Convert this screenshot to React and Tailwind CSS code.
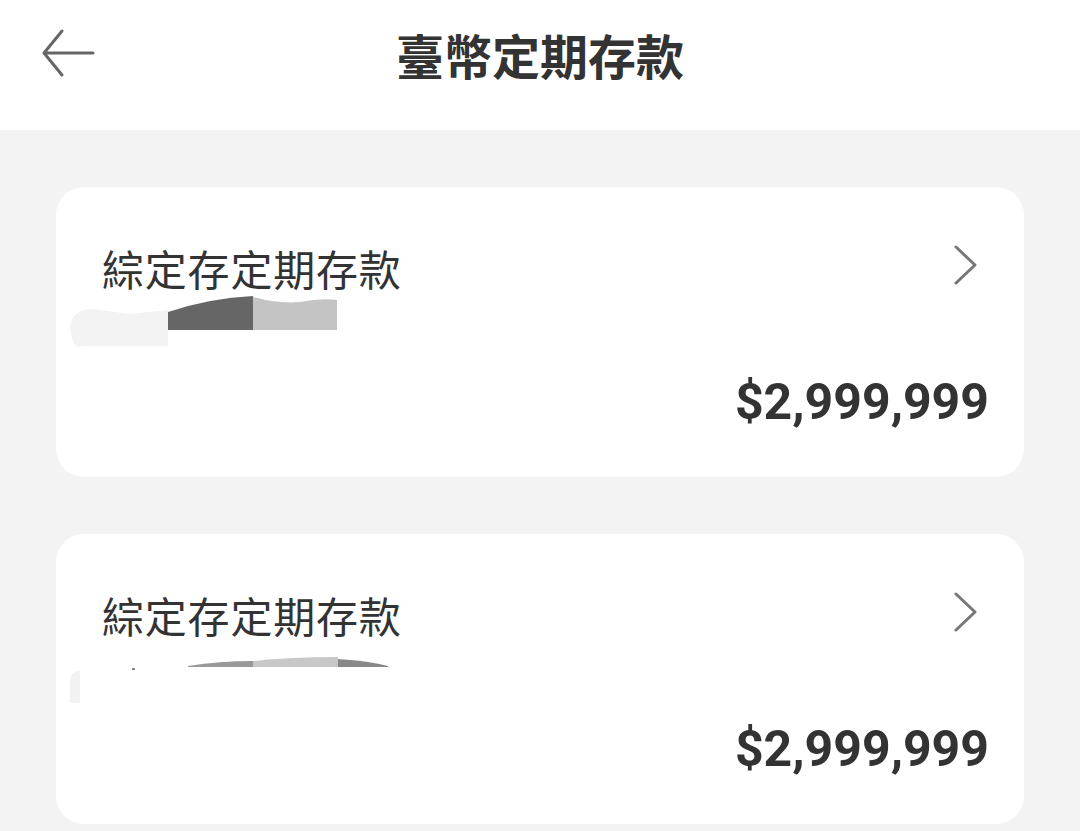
import React from "react";

function Card({ variant }) {
  return (
    <div className="h-[290px] rounded-[28px] bg-white flex flex-col pl-[46px] pr-[36px] pt-[56px] pb-[50px]">
      <div className="flex items-start justify-between">
        <div
          className="text-[42px] leading-[50px] text-[#333] tracking-[0.8px]"
          style={{ fontFamily: '"Noto Sans CJK TC", "Noto Sans", sans-serif' }}
        >
          綜定存定期存款
        </div>
        <svg width="26" height="40" viewBox="0 0 26 40" className="mr-[9px] mt-[2px]">
          <path d="M3 2 L22 20 L3 38" fill="none" stroke="#777" strokeWidth="3" strokeLinecap="round" strokeLinejoin="round" />
        </svg>
      </div>
      <div className="h-[44px] -ml-[32px] mt-[3px]">
        {variant === 1 ? (
          <svg width="280" height="60" viewBox="0 0 280 60">
            <path d="M0 30 Q4 10 30 14 L60 18 L98 14 L98 50 L12 50 Q2 55 0 30 Z" fill="#f3f3f3" />
            <path d="M98 14 Q140 0 183 -2 L183 32 L98 32 Z" fill="#666" transform="translate(0 2)" />
            <path d="M183 1 Q210 8 230 6 Q250 2 267 4 L267 34 L183 34 Z" fill="#c4c4c4" />
          </svg>
        ) : (
          <svg width="360" height="60" viewBox="0 0 360 60">
            <path d="M0 40 Q0 28 10 28 L10 60 L0 60 Z" fill="#f2f2f2" />
            <rect x="62" y="25" width="3" height="2" fill="#888" />
            <path d="M118 23 Q150 18 183 18 L183 24 L118 24 Z" fill="#999" />
            <path d="M183 18 Q220 14 268 14 L268 24 L183 24 Z" fill="#c8c8c8" />
            <path d="M268 16 Q300 18 318 23 L318 24 L268 24 Z" fill="#888" />
          </svg>
        )}
      </div>
      <div className="mt-auto flex justify-end">
        <div
          className="text-[50px] leading-[50px] font-bold text-[#333] -mr-[1px]"
          style={{ fontFamily: 'Roboto, "Liberation Sans", sans-serif' }}
        >
          $2,999,999
        </div>
      </div>
    </div>
  );
}

export default function App() {
  return (
    <div className="w-[1080px] h-[831px] overflow-hidden bg-[#f3f3f3]">
      <header className="h-[130px] bg-white relative">
        <div className="h-[108px] flex items-center justify-center">
          <div
            className="text-[48px] font-bold text-[#333]"
            style={{ fontFamily: '"Noto Sans CJK TC", "Noto Sans", sans-serif' }}
          >
            臺幣定期存款
          </div>
        </div>
        <svg width="56" height="50" viewBox="0 0 56 50" className="absolute left-[40px] top-[28px]">
          <path d="M22 3 L4 25 L22 47 M4 25 L53 25" fill="none" stroke="#666" strokeWidth="3" strokeLinecap="round" strokeLinejoin="round" />
        </svg>
      </header>
      <main className="px-[56px] pt-[57px] flex flex-col gap-[57px]">
        <Card variant={1} />
        <Card variant={2} />
      </main>
    </div>
  );
}
